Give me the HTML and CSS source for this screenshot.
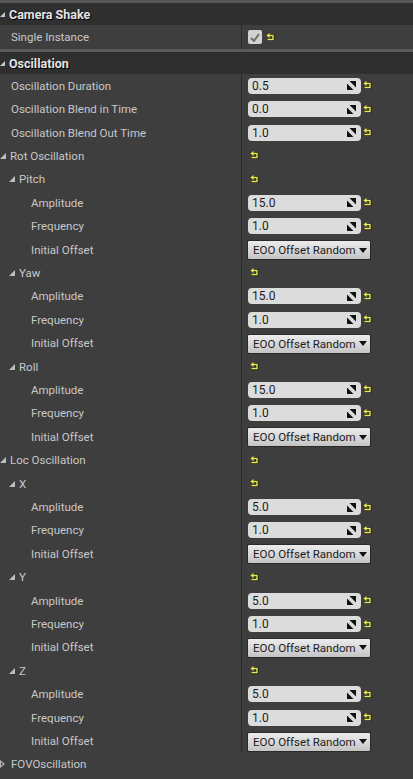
FILE: index.html
```html
<!DOCTYPE html>
<html lang="en">
<head>
    <meta charset="UTF-8">
    <title>Details</title>
    <link rel="stylesheet" href="styles.css">
</head>
<body>
<div class="panel">
    <div class="topbar"></div>

    <div class="cat_head"><span class="tri_open"></span>Camera Shake</div>
    <div class="row row_tall">
        <div class="name lv0">Single Instance</div>
        <div class="val">
            <span class="check">
                <svg width="10" height="9" viewBox="0 0 10 9"><path d="M1 5 L4 8 L9 1" fill="none" stroke="#6e6e6e" stroke-width="2"/></svg>
            </span>
            <svg class="reset" width="9" height="9" viewBox="0 0 9 9"><path d="M3 2.5 H7 V6.5 H1.5" fill="none" stroke="#111" stroke-width="2.6"/><path d="M3 2.5 H7 V6.5 H1.5" fill="none" stroke="#eaea50" stroke-width="1.4"/><path d="M0.5 2.5 L3.5 0 L3.5 5 Z" fill="#eaea50"/></svg>
        </div>
    </div>
    <div class="sep"></div>

    <div class="cat_head"><span class="tri_open"></span>Oscillation</div>
    <div id="rows"></div>
</div>

<script>
    var aRows=[
        ['Oscillation Duration',0,'n','0.5'],
        ['Oscillation Blend in Time',0,'n','0.0'],
        ['Oscillation Blend Out Time',0,'n','1.0'],
        ['Rot Oscillation',0,'g'],
        ['Pitch',1,'g'],
        ['Amplitude',2,'n','15.0'],
        ['Frequency',2,'n','1.0'],
        ['Initial Offset',2,'d'],
        ['Yaw',1,'g'],
        ['Amplitude',2,'n','15.0'],
        ['Frequency',2,'n','1.0'],
        ['Initial Offset',2,'d'],
        ['Roll',1,'g'],
        ['Amplitude',2,'n','15.0'],
        ['Frequency',2,'n','1.0'],
        ['Initial Offset',2,'d'],
        ['Loc Oscillation',0,'g'],
        ['X',1,'g'],
        ['Amplitude',2,'n','5.0'],
        ['Frequency',2,'n','1.0'],
        ['Initial Offset',2,'d'],
        ['Y',1,'g'],
        ['Amplitude',2,'n','5.0'],
        ['Frequency',2,'n','1.0'],
        ['Initial Offset',2,'d'],
        ['Z',1,'g'],
        ['Amplitude',2,'n','5.0'],
        ['Frequency',2,'n','1.0'],
        ['Initial Offset',2,'d'],
        ['FOVOscillation',0,'c']
    ];
    var sReset='<svg class="reset" width="9" height="9" viewBox="0 0 9 9"><path d="M3 2.5 H7 V6.5 H1.5" fill="none" stroke="#111" stroke-width="2.6"/><path d="M3 2.5 H7 V6.5 H1.5" fill="none" stroke="#eaea50" stroke-width="1.4"/><path d="M0.5 2.5 L3.5 0 L3.5 5 Z" fill="#eaea50"/></svg>';
    var sSpin='<svg class="spin" width="9" height="9" viewBox="0 0 9 9"><path d="M0 9 L0 2.5 L6.5 9 Z M9 0 L9 6.5 L2.5 0 Z" fill="#111"/></svg>';
    var oBox=document.getElementById('rows');
    var str='';
    for(var i=0;i<aRows.length;i++){
        var r=aRows[i];
        var tri='';
        if(r[2]=='g')tri='<span class="tri_open small"></span>';
        if(r[2]=='c')tri='<span class="tri_closed"></span>';
        var val='';
        if(r[2]=='n')val='<span class="num"><span>'+r[3]+'</span>'+sSpin+'</span>'+sReset;
        if(r[2]=='g')val=sReset;
        if(r[2]=='d')val='<span class="combo">EOO Offset Random<i></i></span>';
        str+='<div class="row"><div class="name lv'+r[1]+(tri?' has_tri':'')+'">'+tri+r[0]+'</div>'
            +'<div class="val'+(r[2]=='c'?' no_line':'')+'">'+val+'</div></div>';
    }
    oBox.innerHTML=str;
</script>
</body>
</html>
```

FILE: styles.css
```css
*{
    margin: 0;
    padding: 0;
    box-sizing: border-box;
}
body{
    background:#3e3e3e;
    font-family: Roboto, "Liberation Sans", sans-serif;
}
.panel{
    width:413px;
    height:779px;
    overflow:hidden;
    background:#3e3e3e;
}
.topbar{
    height:3px;
    background:#575757;
}
.sep{
    height:3px;
    background:#5a5a5a;
}
.cat_head{
    height:22px;
    background:#2f2f2f;
    color:#e4e4e4;
    font-size:12.5px;
    font-weight:bold;
    text-shadow:1px 1px 0 #000;
    display:flex;
    align-items:center;
    padding-left:0;
}
.tri_open{
    width:0;
    height:0;
    border-left:5px solid transparent;
    border-bottom:5px solid #bdbdbd;
    margin-right:4px;
}
.row .tri_open{
    border-left-width:6px;
    border-bottom-width:6px;
}
.cat_head .tri_open{
    border-bottom-color:#c8c8c8;
    margin-right:4px;
}
.tri_closed{
    width:6px;
    height:8px;
    margin-right:5px;
    position:relative;
}
.tri_closed:before{
    content:'';
    display:block;
    width:0;
    height:0;
    border-top:4px solid transparent;
    border-bottom:4px solid transparent;
    border-left:5px solid #bbb;
}
.tri_closed:after{
    content:'';
    position:absolute;
    left:1px;
    top:2px;
    width:0;
    height:0;
    border-top:2px solid transparent;
    border-bottom:2px solid transparent;
    border-left:2.5px solid #3e3e3e;
}
.row{
    height:23.41px;
    display:flex;
    color:#c8c8c8;
    font-size:11.5px;
}
.row_tall{
    height:24px;
}
.name{
    width:241px;
    display:flex;
    align-items:center;
    white-space:nowrap;
}
.lv0{ padding-left:11px; }
.lv1{ padding-left:21px; }
.lv2{ padding-left:31px; }
.lv0.has_tri{ padding-left:0; }
.lv1.has_tri{ padding-left:9px; }
.val{
    flex:1;
    border-left:1px solid #2a2a2a;
    display:flex;
    align-items:center;
    padding-left:6px;
}
.no_line{
    border-left-color:transparent;
}
.check{
    width:14px;
    height:14px;
    border-radius:2px;
    background:#d2d2d2;
    display:flex;
    align-items:center;
    justify-content:center;
    margin-right:2px;
}
.reset{
    display:block;
    margin-left:2px;
}
.num{
    width:113px;
    height:16px;
    border-radius:4px;
    background:#dcdcdc;
    color:#1c1c1c;
    font-size:12px;
    display:flex;
    align-items:center;
    justify-content:space-between;
    padding:0 5px 0 4px;
}
.spin{
    display:block;
}
.combo{
    width:124px;
    height:20px;
    border:1px solid #2a2a2a;
    border-radius:2px;
    background:linear-gradient(#ececec,#c4c4c4);
    color:#1c1c1c;
    font-size:11.5px;
    white-space:nowrap;
    display:flex;
    align-items:center;
    padding-left:5px;
    margin-left:-1px;
    margin-top:1px;
}
.combo i{
    flex-shrink:0;
    width:0;
    height:0;
    border-left:4.5px solid transparent;
    border-right:4.5px solid transparent;
    border-top:5px solid #111;
    margin-left:3px;
}
```
